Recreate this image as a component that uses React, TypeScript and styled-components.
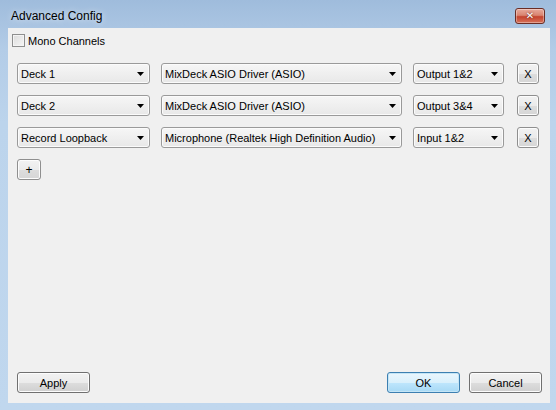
import React, {useState} from 'react';
import styled, {createGlobalStyle} from "styled-components";

const GlobalStyle = createGlobalStyle`
  html, body {
    margin: 0;
    padding: 0;
    background: #bcd4ec;
  }
  * {
    box-sizing: border-box;
  }
`

interface Route {
    id: number
    source: string
    device: string
    channels: string
}

const initialRoutes: Route[] = [
    {id: 1, source: "Deck 1", device: "MixDeck ASIO Driver (ASIO)", channels: "Output 1&2"},
    {id: 2, source: "Deck 2", device: "MixDeck ASIO Driver (ASIO)", channels: "Output 3&4"},
    {id: 3, source: "Record Loopback", device: "Microphone (Realtek High Definition Audio)", channels: "Input 1&2"},
]

const Arrow = () => (
    <svg width="7" height="4" viewBox="0 0 7 4">
        <path d="M0 0 H7 L3.5 4 Z" fill="#000"/>
    </svg>
)

const Combo = ({value, width}: {value: string, width: number}) => (
    <ComboBox $width={width}>
        <ComboText>{value}</ComboText>
        <Arrow/>
    </ComboBox>
)

export default function App() {
    const [mono, setMono] = useState<boolean>(false)
    const [routes, setRoutes] = useState<Route[]>(initialRoutes)

    const removeRoute = (id: number) => setRoutes(routes.filter(r => r.id !== id))

    return (
        <>
            <GlobalStyle/>
            <Window>
                <TitleBar>
                    <Title>Advanced Config</Title>
                    <CloseButton>
                        <CloseGlyph>✕</CloseGlyph>
                    </CloseButton>
                </TitleBar>
                <Client>
                    <CheckRow onClick={() => setMono(!mono)}>
                        <CheckBox $checked={mono}/>
                        <Label>Mono Channels</Label>
                    </CheckRow>
                    <Routes>
                        {routes.map(route =>
                            <RouteRow key={route.id}>
                                <Combo value={route.source} width={133}/>
                                <Combo value={route.device} width={241}/>
                                <Combo value={route.channels} width={91}/>
                                <RemoveButton onClick={() => removeRoute(route.id)}>X</RemoveButton>
                            </RouteRow>
                        )}
                        <AddButton>+</AddButton>
                    </Routes>
                    <Footer>
                        <Button>Apply</Button>
                        <FooterRight>
                            <Button $primary>OK</Button>
                            <Button>Cancel</Button>
                        </FooterRight>
                    </Footer>
                </Client>
            </Window>
        </>
    );
}

const Window = styled.div`
  width: 556px;
  height: 410px;
  display: flex;
  flex-direction: column;
  padding: 0 6px 7px 8px;
  background: linear-gradient(180deg, #9fbcdc 0%, #b3cce7 12%, #bcd4ec 30%, #c0d7ee 100%);
  font-family: "Liberation Sans", Arial, sans-serif;
  font-size: 11px;
  color: #000;
`
const TitleBar = styled.div`
  height: 28px;
  display: flex;
  align-items: center;
  padding: 4px 3px 0 3px;
`
const Title = styled.div`
  font-size: 12px;
  color: #000;
  text-shadow: 0 0 6px rgba(255, 255, 255, 0.8);
`
const CloseButton = styled.div`
  margin-left: auto;
  margin-right: 2px;
  width: 30px;
  height: 16px;
  border: 1px solid #6a2d25;
  border-radius: 3px;
  background: linear-gradient(180deg, #e8aa9c 0%, #d98470 45%, #c4432e 55%, #d7725a 100%);
  display: flex;
  align-items: center;
  justify-content: center;
  box-shadow: inset 0 0 0 1px rgba(255, 255, 255, 0.35);
`
const CloseGlyph = styled.span`
  color: #fff;
  font-family: "DejaVu Sans", sans-serif;
  font-weight: bold;
  font-size: 10px;
  line-height: 1;
  text-shadow: 0 0 2px #5a1a12;
`
const Client = styled.div`
  flex: 1;
  background: #f0f0f0;
  display: flex;
  flex-direction: column;
  padding: 6px 8px 10px 9px;
`
const CheckRow = styled.div`
  display: flex;
  align-items: center;
  gap: 3px;
  margin-left: -5px;
  cursor: default;
`
const CheckBox = styled.div<{ $checked: boolean }>`
  width: 13px;
  height: 13px;
  border: 1px solid #8e8f8f;
  background: linear-gradient(135deg, #dcdcdc 0%, #f6f6f6 100%);
  box-shadow: inset 0 0 0 1px #f4f4f4;
`
const Label = styled.span`
  font-size: 11px;
`
const Routes = styled.div`
  display: flex;
  flex-direction: column;
  gap: 11px;
  margin-top: 16px;
`
const RouteRow = styled.div`
  display: flex;
  align-items: center;
  gap: 11px;
`
const ComboBox = styled.div<{ $width: number }>`
  width: ${p => p.$width}px;
  height: 21px;
  display: flex;
  align-items: center;
  justify-content: space-between;
  padding: 0 5px 0 3px;
  border: 1px solid #9a9a9a;
  border-radius: 3px;
  background: linear-gradient(180deg, #f6f6f6 0%, #efefef 50%, #e8e8e8 100%);
  box-shadow: inset 0 0 0 1px #fbfbfb;
`
const ComboText = styled.span`
  font-size: 11px;
  white-space: nowrap;
`
const RemoveButton = styled.button`
  width: 22px;
  height: 21px;
  margin-left: 2px;
  padding: 0;
  border: 1px solid #8f8f8f;
  border-radius: 3px;
  background: linear-gradient(180deg, #f2f2f2 0%, #ebebeb 50%, #dddddd 51%, #d6d6d6 100%);
  box-shadow: inset 0 0 0 1px #fcfcfc;
  font-family: "Liberation Sans", Arial, sans-serif;
  font-size: 11px;
  color: #000;
`
const AddButton = styled(RemoveButton)`
  width: 24px;
  height: 21px;
  margin-left: 0;
  font-size: 12px;
`
const Footer = styled.div`
  margin-top: auto;
  display: flex;
  justify-content: space-between;
  align-items: center;
`
const FooterRight = styled.div`
  display: flex;
  gap: 9px;
`
const Button = styled.button<{ $primary?: boolean }>`
  width: 73px;
  height: 21px;
  padding: 0;
  border: 1px solid ${p => p.$primary ? "#3c7fb1" : "#707070"};
  border-radius: 3px;
  background: ${p => p.$primary
    ? "linear-gradient(180deg, #eaf6fd 0%, #d9f0fc 50%, #bee6fd 51%, #a7d9f5 100%)"
    : "linear-gradient(180deg, #f2f2f2 0%, #ebebeb 50%, #dddddd 51%, #cfcfcf 100%)"};
  box-shadow: inset 0 0 0 1px ${p => p.$primary ? "#c4e5f6" : "#fcfcfc"};
  font-family: "Liberation Sans", Arial, sans-serif;
  font-size: 11px;
  color: #000;
`
